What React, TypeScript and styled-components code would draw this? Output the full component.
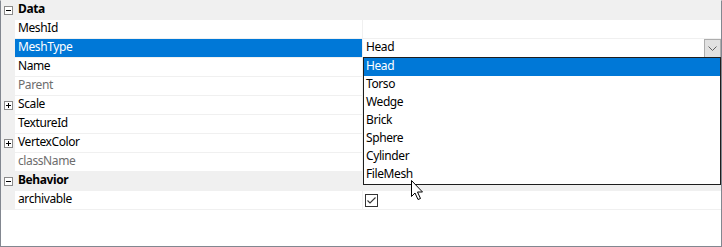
import React from 'react'
import styled, { createGlobalStyle } from 'styled-components'

const GlobalStyle = createGlobalStyle`
    html, body {
        margin: 0;
        padding: 0;
        background: #ffffff;
    }
    body {
        font-family: "Noto Sans", "Open Sans", sans-serif;
        font-size: 12px;
        letter-spacing: -0.4px;
        color: #000000;
    }
`

const Frame = styled.div`
    position: relative;
    width: 722px;
    height: 247px;
    box-sizing: border-box;
    border-left: 1px solid #828790;
    border-right: 1px solid #828790;
    border-bottom: 1px solid #828790;
    border-top: 1px solid #f0f0f0;
    background: #ffffff;
    overflow: hidden;
`

const Row = styled.div`
    display: grid;
    grid-template-columns: 14px 347px 1fr;
    height: 18px;
    border-bottom: 1px solid #f0f0f0;
`

const CategoryRow = styled.div`
    display: flex;
    align-items: flex-start;
    height: 18px;
    border-bottom: 1px solid #f0f0f0;
    background: #f0f0f0;
    font-weight: 700;
`

const Gutter = styled.div`
    background: #f0f0f0;
    display: flex;
    align-items: center;
    justify-content: center;
`

const ToggleBox = styled.span<{ $open?: boolean }>`
    position: relative;
    display: inline-block;
    width: 9px;
    height: 9px;
    box-sizing: border-box;
    border: 1px solid #8a8a8a;
    background: #ffffff;
    margin-left: 1px;

    &::before {
        content: '';
        position: absolute;
        left: 1px;
        top: 3px;
        width: 5px;
        height: 1px;
        background: #000000;
    }

    &::after {
        content: '';
        position: absolute;
        left: 3px;
        top: 1px;
        width: 1px;
        height: 5px;
        background: #000000;
        display: ${p => (p.$open ? 'none' : 'block')};
    }
`

const CategoryGutter = styled.div`
    width: 14px;
    height: 18px;
    display: flex;
    align-items: center;
    justify-content: center;
`

const CategoryLabel = styled.span`
    padding-left: 3px;
    height: 18px;
    line-height: 15px;
`

const NameCell = styled.div<{ $selected?: boolean; $readOnly?: boolean }>`
    padding-left: 3px;
    height: 18px;
    line-height: 15px;
    white-space: nowrap;
    background: ${p => (p.$selected ? '#0078d7' : '#ffffff')};
    color: ${p => (p.$selected ? '#ffffff' : p.$readOnly ? '#6d6d6d' : '#000000')};
`

const ValueCell = styled.div`
    position: relative;
    display: flex;
    align-items: flex-start;
    border-left: 1px solid #f0f0f0;
    padding-left: 3px;
    height: 18px;
    line-height: 15px;
    background: #ffffff;
`

const ValueText = styled.span`
    flex: 1;
`

const DropButton = styled.span`
    width: 17px;
    height: 19px;
    box-sizing: border-box;
    border: 1px solid #adadad;
    background: #e1e1e1;
    display: flex;
    align-items: center;
    justify-content: center;
`

const DropList = styled.ul`
    position: absolute;
    left: 0;
    top: 18px;
    width: 358px;
    margin: 0;
    padding: 0;
    list-style: none;
    box-sizing: border-box;
    border: 1px solid #1e1e1e;
    background: #ffffff;
    z-index: 2;
`

const DropItem = styled.li<{ $active?: boolean }>`
    height: 18px;
    line-height: 15px;
    padding-left: 2px;
    background: ${p => (p.$active ? '#0078d7' : '#ffffff')};
    color: ${p => (p.$active ? '#ffffff' : '#000000')};
`

const CheckBox = styled.span`
    width: 13px;
    height: 13px;
    margin-top: 3px;
    margin-left: -1px;
    box-sizing: border-box;
    border: 1px solid #333333;
    background: #ffffff;
    display: flex;
    align-items: center;
    justify-content: center;
`

const Cursor = styled.svg`
    position: absolute;
    left: 409px;
    top: 178px;
    z-index: 3;
`

type Prop = {
    name: string
    expandable?: boolean
    readOnly?: boolean
    selected?: boolean
}

const dataProps: Prop[] = [
    { name: 'MeshId' },
    { name: 'MeshType', selected: true },
    { name: 'Name' },
    { name: 'Parent', readOnly: true },
    { name: 'Scale', expandable: true },
    { name: 'TextureId' },
    { name: 'VertexColor', expandable: true },
    { name: 'className', readOnly: true },
]

const meshTypes = ['Head', 'Torso', 'Wedge', 'Brick', 'Sphere', 'Cylinder', 'FileMesh']

function Chevron() {
    return (
        <svg width="9" height="5" viewBox="0 0 9 5">
            <path d="M0.5 0.5 L4.5 4.5 L8.5 0.5" fill="none" stroke="#606060" strokeWidth="1" />
        </svg>
    )
}

function MeshTypeEditor() {
    return (
        <ValueCell>
            <ValueText>Head</ValueText>
            <DropButton>
                <Chevron />
            </DropButton>
            <DropList>
                {meshTypes.map((t, i) => (
                    <DropItem key={t} $active={i === 0}>
                        {t}
                    </DropItem>
                ))}
            </DropList>
        </ValueCell>
    )
}

export default function App() {
    return (
        <>
            <GlobalStyle />
            <Frame>
                <CategoryRow>
                    <CategoryGutter>
                        <ToggleBox $open />
                    </CategoryGutter>
                    <CategoryLabel>Data</CategoryLabel>
                </CategoryRow>

                {dataProps.map(p => (
                    <Row key={p.name}>
                        <Gutter>{p.expandable && <ToggleBox />}</Gutter>
                        <NameCell $selected={p.selected} $readOnly={p.readOnly}>
                            {p.name}
                        </NameCell>
                        {p.name === 'MeshType' ? <MeshTypeEditor /> : <ValueCell />}
                    </Row>
                ))}

                <CategoryRow>
                    <CategoryGutter>
                        <ToggleBox $open />
                    </CategoryGutter>
                    <CategoryLabel>Behavior</CategoryLabel>
                </CategoryRow>

                <Row>
                    <Gutter />
                    <NameCell>archivable</NameCell>
                    <ValueCell>
                        <CheckBox>
                            <svg width="11" height="11" viewBox="0 0 11 11">
                                <path d="M1.5 5.5 L4 8 L9.5 2.5" fill="none" stroke="#333333" strokeWidth="1.1" />
                            </svg>
                        </CheckBox>
                    </ValueCell>
                </Row>

                <Cursor width="14" height="22" viewBox="0 0 14 22">
                    <path
                        d="M1.5 1.5 L1.5 17.5 L5 14 L8 20.5 L10.5 19.5 L7.5 13 L12.5 13 Z"
                        fill="#ffffff"
                        stroke="#000000"
                        strokeWidth="1"
                        strokeLinejoin="miter"
                    />
                </Cursor>
            </Frame>
        </>
    )
}
